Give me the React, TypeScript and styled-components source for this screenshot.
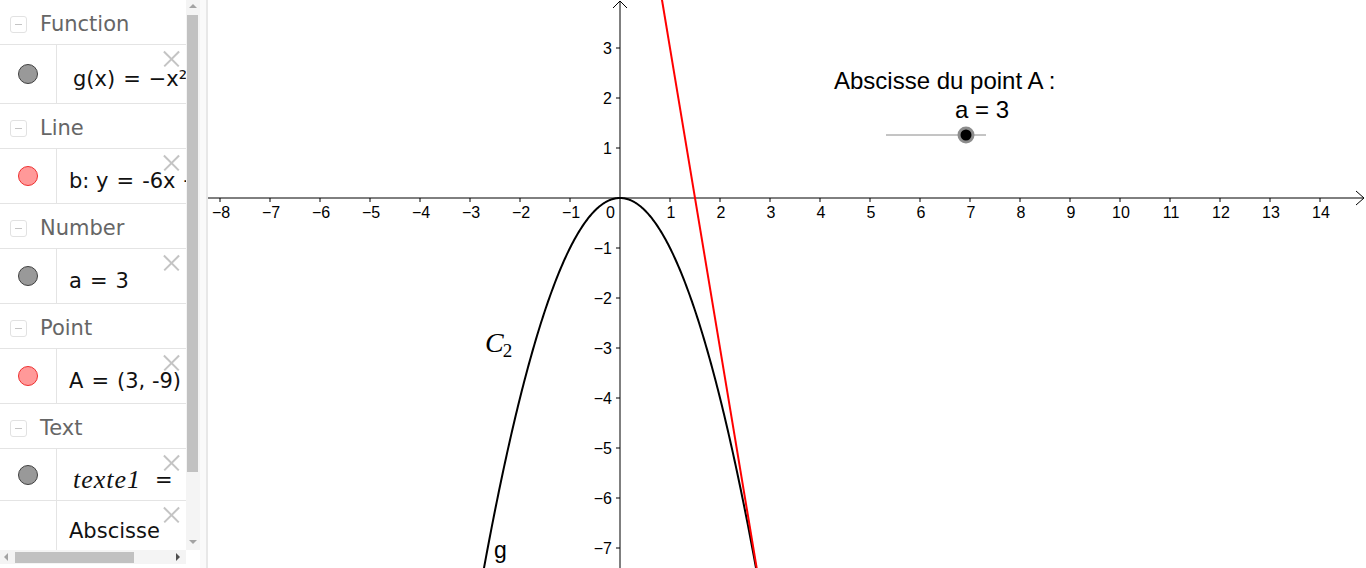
import styled, { createGlobalStyle } from 'styled-components'
import { Fragment } from 'react'

const GlobalStyle = createGlobalStyle`
  html, body {
    margin: 0;
    padding: 0;
    background: #ffffff;
    overflow: hidden;
  }
  #root {
    height: 568px;
  }
`

const Page = styled.div`
  display: flex;
  width: 1366px;
  height: 568px;
  background: #ffffff;
`

/* ---------- algebra view ---------- */

const Sidebar = styled.aside`
  display: flex;
  flex-direction: column;
  width: 200px;
  flex-shrink: 0;
`

const SidebarBody = styled.div`
  display: flex;
  height: 550px;
`

const ListViewport = styled.div`
  width: 186px;
  overflow: hidden;
`

const GroupHeader = styled.div`
  display: flex;
  align-items: center;
  gap: 13px;
  height: 44px;
  padding-left: 10px;
  border-bottom: 1px solid #e4e4e4;
`

const CollapseBox = styled.span`
  position: relative;
  width: 17px;
  height: 17px;
  margin-top: 4px;
  border: 1px solid #e2e2e2;
  border-radius: 3px;
  box-sizing: border-box;

  &::after {
    content: '';
    position: absolute;
    left: 4px;
    right: 4px;
    top: 7px;
    height: 1px;
    background: #c4c4c4;
  }
`

const GroupTitle = styled.span`
  margin-top: 3px;
  font-family: 'DejaVu Sans', sans-serif;
  font-size: 21px;
  color: #666666;
  white-space: nowrap;
`

const ItemRow = styled.div<{ $height: number }>`
  position: relative;
  display: flex;
  height: ${({ $height }) => $height}px;
  border-bottom: 1px solid #e4e4e4;
  overflow: hidden;
`

const MarkerCell = styled.div`
  display: flex;
  align-items: center;
  justify-content: center;
  width: 56px;
  flex-shrink: 0;
  border-right: 1px solid #e4e4e4;
`

const Marker = styled.span<{ $fill: string; $stroke: string }>`
  width: 20px;
  height: 20px;
  border-radius: 50%;
  box-sizing: border-box;
  background: ${({ $fill }) => $fill};
  border: 1px solid ${({ $stroke }) => $stroke};
`

const ItemContent = styled.div<{ $math?: boolean; $indent: number; $wrap?: boolean }>`
  display: flex;
  align-items: ${({ $wrap }) => ($wrap ? 'flex-start' : 'center')};
  flex-wrap: ${({ $wrap }) => ($wrap ? 'wrap' : 'nowrap')};
  width: ${({ $wrap }) => ($wrap ? '100px' : 'auto')};
  padding: ${({ $wrap }) => ($wrap ? 13 : 10)}px 0 0 ${({ $indent }) => $indent}px;
  overflow: hidden;
  white-space: ${({ $wrap }) => ($wrap ? 'normal' : 'nowrap')};
  line-height: ${({ $wrap }) => ($wrap ? '34px' : 'normal')};
  font-family: ${({ $math }) =>
    $math ? "'Liberation Serif', serif" : "'DejaVu Sans', sans-serif"};
  font-style: ${({ $math }) => ($math ? 'italic' : 'normal')};
  font-size: ${({ $math }) => ($math ? 26 : 21)}px;
  letter-spacing: ${({ $math }) => ($math ? 1 : 0)}px;
  color: #111111;
`

const Eq = styled.span<{ $math?: boolean }>`
  margin: 0 ${({ $math }) => ($math ? 14 : 8)}px;
  font-style: normal;
  font-family: 'DejaVu Sans', sans-serif;
  font-size: 21px;
`

const CloseIcon = styled.span`
  position: absolute;
  top: 6px;
  right: 7px;
  width: 16px;
  height: 16px;
  background: transparent;

  &::before,
  &::after {
    content: '';
    position: absolute;
    left: -2px;
    top: 7px;
    width: 21px;
    height: 1.5px;
    background: #c4c4c4;
    transform: rotate(45deg);
  }
  &::after {
    transform: rotate(-45deg);
  }
`

const VScrollbar = styled.div`
  position: relative;
  width: 14px;
  background: #f4f4f4;
`

const VThumb = styled.div`
  position: absolute;
  left: 1px;
  right: 2px;
  top: 15px;
  height: 457px;
  background: #c1c1c1;
`

const Arrow = styled.span<{ $dir: 'up' | 'down' | 'left' | 'right' }>`
  position: absolute;
  width: 0;
  height: 0;
  ${({ $dir }) => {
    switch ($dir) {
      case 'up':
        return 'top: 4px; left: 3px; border: 4px solid transparent; border-top: 0; border-bottom: 4px solid #a3a3a3;'
      case 'down':
        return 'bottom: 6px; left: 3px; border: 4px solid transparent; border-bottom: 0; border-top: 4px solid #a3a3a3;'
      case 'left':
        return 'left: 4px; top: 3px; border: 4px solid transparent; border-left: 0; border-right: 4px solid #a3a3a3;'
      default:
        return 'right: 6px; top: 3px; border: 4px solid transparent; border-right: 0; border-left: 4px solid #505050;'
    }
  }}
`

const SidebarFooter = styled.div`
  display: flex;
  height: 14px;
`

const HScrollbar = styled.div`
  position: relative;
  width: 186px;
  background: #f4f4f4;
`

const HThumb = styled.div`
  position: absolute;
  top: 2px;
  bottom: 1px;
  left: 15px;
  width: 119px;
  background: #c1c1c1;
`

const Corner = styled.div`
  width: 14px;
  background: #ffffff;
`

const Splitter = styled.div`
  width: 6px;
  flex-shrink: 0;
  background: #fafafa;
  border-right: 2px solid #e8e8e8;
`

/* ---------- graphics view ---------- */

const Graph = styled.div`
  flex: 1;
  position: relative;
  overflow: hidden;
`

const Canvas = styled.svg`
  display: block;
  width: 100%;
  height: 100%;
  font-family: 'Liberation Sans', Arial, sans-serif;
`

type Item = {
  text: string
  height: number
  marker?: 'gray' | 'red'
  math?: boolean
  wrap?: boolean
  indent: number
}

type Group = { title: string; items: Item[] }

const groups: Group[] = [
  { title: 'Function', items: [{ text: 'g(x) = −x²', height: 58, marker: 'gray', indent: 16 }] },
  { title: 'Line', items: [{ text: 'b: y = -6x + 9', height: 54, marker: 'red', indent: 12 }] },
  { title: 'Number', items: [{ text: 'a = 3', height: 54, marker: 'gray', indent: 12 }] },
  { title: 'Point', items: [{ text: 'A = (3, -9)', height: 54, marker: 'red', indent: 12 }] },
  {
    title: 'Text',
    items: [
      { text: 'texte1 = "Abscisse du point A :"', height: 51, marker: 'gray', math: true, indent: 16 },
      { text: 'Abscisse du point A :', height: 100, wrap: true, indent: 12 },
    ],
  },
]

const markerColors = {
  gray: { fill: '#999999', stroke: '#404040' },
  red: { fill: '#ff9999', stroke: '#ee3030' },
}

// renders "lhs = rhs" with the wider spacing of the algebra view
const renderValue = (item: Item) => {
  if (item.wrap) return item.text
  const [lhs, ...rest] = item.text.split(' = ')
  return (
    <Fragment>
      <span>{lhs}</span>
      {rest.length > 0 && <Eq $math={item.math}>=</Eq>}
      {rest.length > 0 && <span>{rest.join(' = ')}</span>}
    </Fragment>
  )
}

// graph coordinates (svg starts at page x = 208)
const OX = 412
const OY = 198
const U = 50
const sx = (x: number): number => OX + x * U
const sy = (y: number): number => OY - y * U

const minus = (n: number): string => (n < 0 ? `\u2212${-n}` : `${n}`)

const parabola = (): string => {
  const pts: string[] = []
  for (let x = -3; x <= 3.0001; x += 0.02) {
    pts.push(`${sx(x).toFixed(2)},${sy(-x * x).toFixed(2)}`)
  }
  return `M${pts.join(' L')}`
}

const xTicks = Array.from({ length: 23 }, (_, i) => i - 8).filter((n) => n !== 0)
const yTicks = [3, 2, 1, -1, -2, -3, -4, -5, -6, -7]

const GraphView: React.FC = () => (
  <Canvas viewBox="0 0 1158 568">
    {/* axes */}
    <line x1={0} y1={OY} x2={1155} y2={OY} stroke="#000" strokeWidth={1} />
    <polyline points="1148,191 1156,198 1148,205" fill="none" stroke="#000" strokeWidth={1} />
    <line x1={OX} y1={568} x2={OX} y2={1} stroke="#000" strokeWidth={1} />
    <polyline points={`${OX - 7},8 ${OX},1 ${OX + 7},8`} fill="none" stroke="#000" strokeWidth={1} />

    {xTicks.map((n) => (
      <g key={`x${n}`}>
        <line x1={sx(n)} y1={OY} x2={sx(n)} y2={OY + 4} stroke="#000" />
        <text x={sx(n) + 1} y={OY + 20} fontSize={16} textAnchor="middle" fill="#000">
          {minus(n)}
        </text>
      </g>
    ))}
    <text x={OX - 5} y={OY + 20} fontSize={16} textAnchor="end" fill="#000">
      0
    </text>
    {yTicks.map((n) => (
      <g key={`y${n}`}>
        <line x1={OX - 4} y1={sy(n)} x2={OX} y2={sy(n)} stroke="#000" />
        <text x={OX - 8} y={sy(n) + 6} fontSize={16} textAnchor="end" fill="#000">
          {minus(n)}
        </text>
      </g>
    ))}

    {/* curves */}
    <path d={parabola()} fill="none" stroke="#000" strokeWidth={2} />
    <line x1={sx(0.6)} y1={sy(-6 * 0.6 + 9)} x2={sx(3.2)} y2={sy(-6 * 3.2 + 9)} stroke="#ff0000" strokeWidth={2} />

    {/* labels */}
    <text x={277} y={352} fontSize={28} fontStyle="italic" fontFamily="'Liberation Serif', serif" fill="#000">
      C
      <tspan fontSize={19} fontStyle="normal" dx={-1} dy={5}>
        2
      </tspan>
    </text>
    <text x={286} y={558} fontSize={23} fill="#000">
      g
    </text>

    {/* slider with caption */}
    <text x={626} y={89} fontSize={24} fill="#000">
      Abscisse du point A :
    </text>
    <text x={747} y={118} fontSize={24} fill="#000">
      a = 3
    </text>
    <line x1={678} y1={135} x2={778} y2={135} stroke="#8a8a8a" strokeWidth={1} />
    <circle cx={758} cy={135} r={7} fill="#000" stroke="#8c8c8c" strokeWidth={3} />
  </Canvas>
)

const App: React.FC = () => (
  <>
    <GlobalStyle />
    <Page>
      <Sidebar>
        <SidebarBody>
          <ListViewport>
            {groups.map((group) => (
              <div key={group.title}>
                <GroupHeader>
                  <CollapseBox />
                  <GroupTitle>{group.title}</GroupTitle>
                </GroupHeader>
                {group.items.map((item) => (
                  <ItemRow key={item.text} $height={item.height}>
                    <MarkerCell>
                      {item.marker && (
                        <Marker
                          $fill={markerColors[item.marker].fill}
                          $stroke={markerColors[item.marker].stroke}
                        />
                      )}
                    </MarkerCell>
                    <ItemContent $math={item.math} $indent={item.indent} $wrap={item.wrap}>
                      {renderValue(item)}
                    </ItemContent>
                    <CloseIcon />
                  </ItemRow>
                ))}
              </div>
            ))}
          </ListViewport>
          <VScrollbar>
            <Arrow $dir="up" />
            <VThumb />
            <Arrow $dir="down" />
          </VScrollbar>
        </SidebarBody>
        <SidebarFooter>
          <HScrollbar>
            <Arrow $dir="left" />
            <HThumb />
            <Arrow $dir="right" />
          </HScrollbar>
          <Corner />
        </SidebarFooter>
      </Sidebar>
      <Splitter />
      <Graph>
        <GraphView />
      </Graph>
    </Page>
  </>
)

export default App
